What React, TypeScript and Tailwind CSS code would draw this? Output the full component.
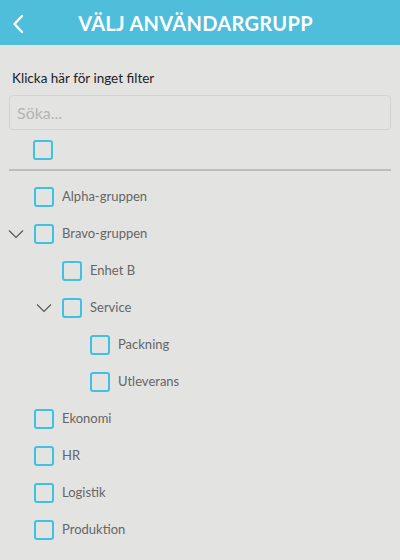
import React from 'react';

type Node = { label: string; level: number; open?: boolean };

const groups: Node[] = [
  { label: 'Alpha-gruppen', level: 0 },
  { label: 'Bravo-gruppen', level: 0, open: true },
  { label: 'Enhet B', level: 1 },
  { label: 'Service', level: 1, open: true },
  { label: 'Packning', level: 2 },
  { label: 'Utleverans', level: 2 },
  { label: 'Ekonomi', level: 0 },
  { label: 'HR', level: 0 },
  { label: 'Logistik', level: 0 },
  { label: 'Produktion', level: 0 },
];

const indent = ['pl-[34px]', 'pl-[62px]', 'pl-[90px]'];
const caretPos = ['left-[8px]', 'left-[36px]', 'left-[64px]'];

function Box() {
  return <div className="w-[20px] h-[20px] shrink-0 rounded-[3px] border-2 border-[#3ec1e3]" />;
}

function Caret({ className }: { className: string }) {
  return (
    <svg className={`absolute top-1/2 -translate-y-1/2 ${className}`} width="16" height="10" viewBox="0 0 16 10" fill="none">
      <path d="M1 1.5 L8 8.5 L15 1.5" stroke="#555" strokeWidth="1.1" />
    </svg>
  );
}

export default function App() {
  return (
    <div className="w-[400px] h-[560px] overflow-hidden bg-[#e3e3e2] font-['Lato',sans-serif]">
      <header className="relative h-[45px] bg-[#4ebedb] flex items-center justify-center">
        <svg className="absolute left-[12px] top-[14px]" width="12" height="20" viewBox="0 0 12 20" fill="none">
          <path d="M10 2 L2.5 10 L10 18" stroke="white" strokeWidth="2.4" strokeLinecap="round" strokeLinejoin="round" />
        </svg>
        <h1 className="text-white font-bold text-[20px] tracking-[0.3px] ml-[-9px]">VÄLJ ANVÄNDARGRUPP</h1>
      </header>

      <div className="px-[9px]">
        <p className="mt-[24px] pl-[3px] text-[13.5px] leading-[18px] text-[#222]">Klicka här för inget filter</p>
        <div className="mt-[8px] h-[35px] rounded-[4px] border border-[#d2d2d1] flex items-center px-[7px]">
          <span className="text-[16px] text-[#b4b4b4]">Söka...</span>
        </div>
        <div className="h-[39px] flex items-center pl-[24px]">
          <Box />
        </div>
        <div className="h-[2px] bg-[#bdbdbc]" />
      </div>

      <ul className="mt-[7px]">
        {groups.map((g) => (
          <li key={g.label} className={`relative h-[37px] flex items-center gap-[8px] ${indent[g.level]}`}>
            {g.open && <Caret className={caretPos[g.level]} />}
            <Box />
            <span className="text-[13px] text-[#666]">{g.label}</span>
          </li>
        ))}
      </ul>
    </div>
  );
}
